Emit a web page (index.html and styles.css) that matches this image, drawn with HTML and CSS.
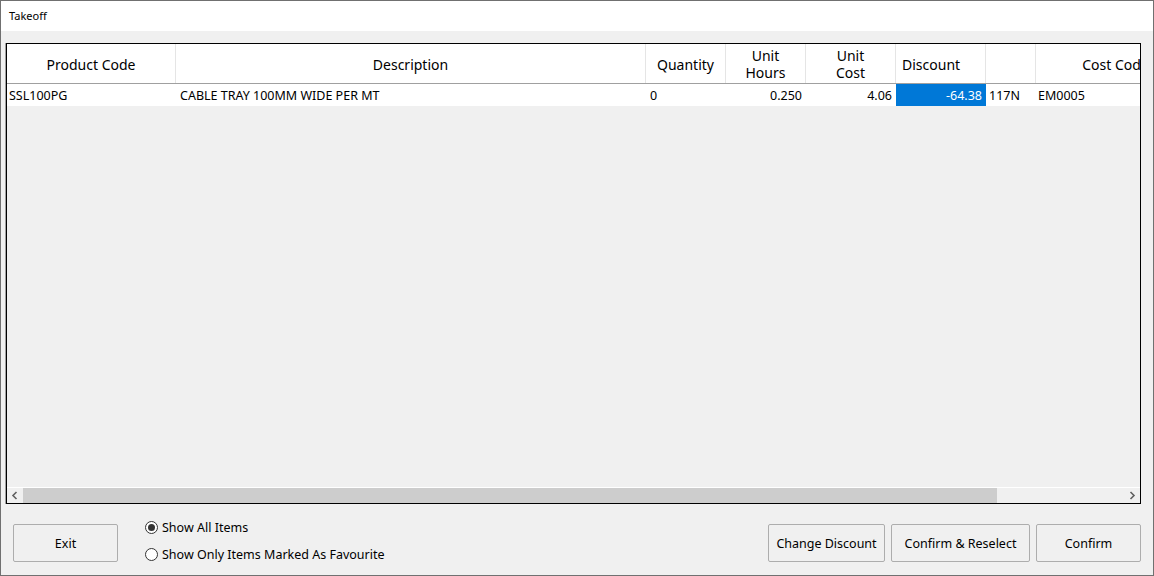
FILE: index.html
```html
<!DOCTYPE html>
<html lang="en">
<head>
    <meta charset="UTF-8">
    <title>Takeoff</title>
    <link rel="stylesheet" href="styles.css">
</head>
<body>

<div class="window">
    <div class="titlebar">Takeoff</div>

    <div class="content">
        <div class="grid">
            <div class="grid-view">
                <div class="grid-head">
                    <div class="th center">Product Code</div>
                    <div class="th center">Description</div>
                    <div class="th center">Quantity</div>
                    <div class="th center">Unit<br>Hours</div>
                    <div class="th center">Unit<br>Cost</div>
                    <div class="th left">Discount</div>
                    <div class="th"></div>
                    <div class="th center">Cost Code</div>
                </div>
                <div class="grid-row">
                    <div class="td">SSL100PG</div>
                    <div class="td pad">CABLE TRAY 100MM WIDE PER MT</div>
                    <div class="td pad">0</div>
                    <div class="td num">0.250</div>
                    <div class="td num">4.06</div>
                    <div class="td num selected">-64.38</div>
                    <div class="td">117N</div>
                    <div class="td">EM0005</div>
                </div>
            </div>
            <div class="hscroll">
                <span class="arrow">
                    <svg width="16" height="15" viewBox="0 0 16 15"><path d="M9.5 4 L6 7.5 L9.5 11" fill="none" stroke="#606060" stroke-width="1.6"/></svg>
                </span>
                <div class="track"><div class="thumb"></div></div>
                <span class="arrow">
                    <svg width="16" height="15" viewBox="0 0 16 15"><path d="M6.5 4 L10 7.5 L6.5 11" fill="none" stroke="#606060" stroke-width="1.6"/></svg>
                </span>
            </div>
        </div>

        <div class="footer">
            <button class="btn exit-btn">Exit</button>
            <div class="options">
                <label class="radio"><span class="dot checked"></span>Show All Items</label>
                <label class="radio"><span class="dot"></span>Show Only Items Marked As Favourite</label>
            </div>
            <div class="actions">
                <button class="btn discount-btn">Change Discount</button>
                <button class="btn reselect-btn">Confirm &amp; Reselect</button>
                <button class="btn confirm-btn">Confirm</button>
            </div>
        </div>
    </div>
</div>

</body>
</html>
```

FILE: styles.css
```css
* {
    box-sizing: border-box;
    margin: 0;
    padding: 0;
}
body {
    font-family: 'Noto Sans', 'Open Sans', sans-serif;
    font-size: 12.5px;
    color: #000;
    background: #fff;
}
.window {
    width: 1154px;
    height: 576px;
    border: 1px solid #707070;
    background: #f0f0f0;
    display: flex;
    flex-direction: column;
}
.titlebar {
    height: 30px;
    line-height: 30px;
    padding-left: 8px;
    background: #fff;
    font-size: 11px;
}
.content {
    flex: 1;
    display: flex;
    flex-direction: column;
    padding: 12px 12px 0 5px;
}
.grid {
    width: 1135px;
    height: 461px;
    border: 1px solid #000;
    box-shadow: -1px 0 0 #a0a0a0;
    display: flex;
    flex-direction: column;
    overflow: hidden;
}
.grid-view {
    flex: 1;
    overflow: hidden;
    background: #f0f0f0;
}
.grid-head, .grid-row {
    display: grid;
    grid-template-columns: 169px 470px 80px 80px 90px 90px 50px 160px;
    width: 1189px;
}
.grid-head {
    height: 40px;
    background: #fff;
    border-bottom: 1px solid #a0a0a0;
    font-size: 14px;
}
.th {
    border-right: 1px solid #e5e5e5;
    display: flex;
    align-items: center;
    line-height: 17px;
    padding-top: 1px;
}
.th.center {
    justify-content: center;
    text-align: center;
}
.th.left {
    padding-left: 6px;
}
.grid-row {
    height: 22px;
    background: #fff;
}
.td {
    padding: 2px 0 0 2px;
    line-height: 20px;
    white-space: nowrap;
    overflow: hidden;
}
.td.pad {
    padding-left: 4px;
}
.td:nth-child(7) {
    padding-left: 3px;
}
.td.num {
    text-align: right;
    padding-right: 4px;
}
.selected {
    background: #0078d7;
    color: #fff;
}
.hscroll {
    height: 16px;
    border-top: 1px solid #fff;
    background: #f0f0f0;
    display: flex;
    align-items: center;
}
.arrow {
    width: 16px;
    height: 15px;
    display: flex;
}
.track {
    flex: 1;
    height: 15px;
}
.thumb {
    width: 974px;
    height: 15px;
    background: #cdcdcd;
}
.footer {
    display: flex;
    align-items: flex-start;
    padding: 20px 0 0 7px;
}
.btn {
    height: 38px;
    border: 1px solid #adadad;
    border-radius: 2px;
    background: #f0f0f0;
    font-family: inherit;
    font-size: 12.5px;
    color: #000;
}
.exit-btn {
    width: 105px;
}
.options {
    display: flex;
    flex-direction: column;
    gap: 9px;
    margin: -6px 0 0 27px;
}
.radio {
    display: flex;
    align-items: center;
    height: 18px;
    font-size: 12.5px;
}
.dot {
    width: 13px;
    height: 13px;
    border: 1px solid #333;
    border-radius: 50%;
    background: #fff;
    margin-right: 4px;
    display: flex;
    align-items: center;
    justify-content: center;
}
.dot.checked::after {
    content: '';
    width: 7px;
    height: 7px;
    border-radius: 50%;
    background: #333;
}
.actions {
    margin-left: auto;
    display: flex;
    gap: 6px;
}
.discount-btn {
    width: 117px;
}
.reselect-btn {
    width: 139px;
}
.confirm-btn {
    width: 105px;
}
```
